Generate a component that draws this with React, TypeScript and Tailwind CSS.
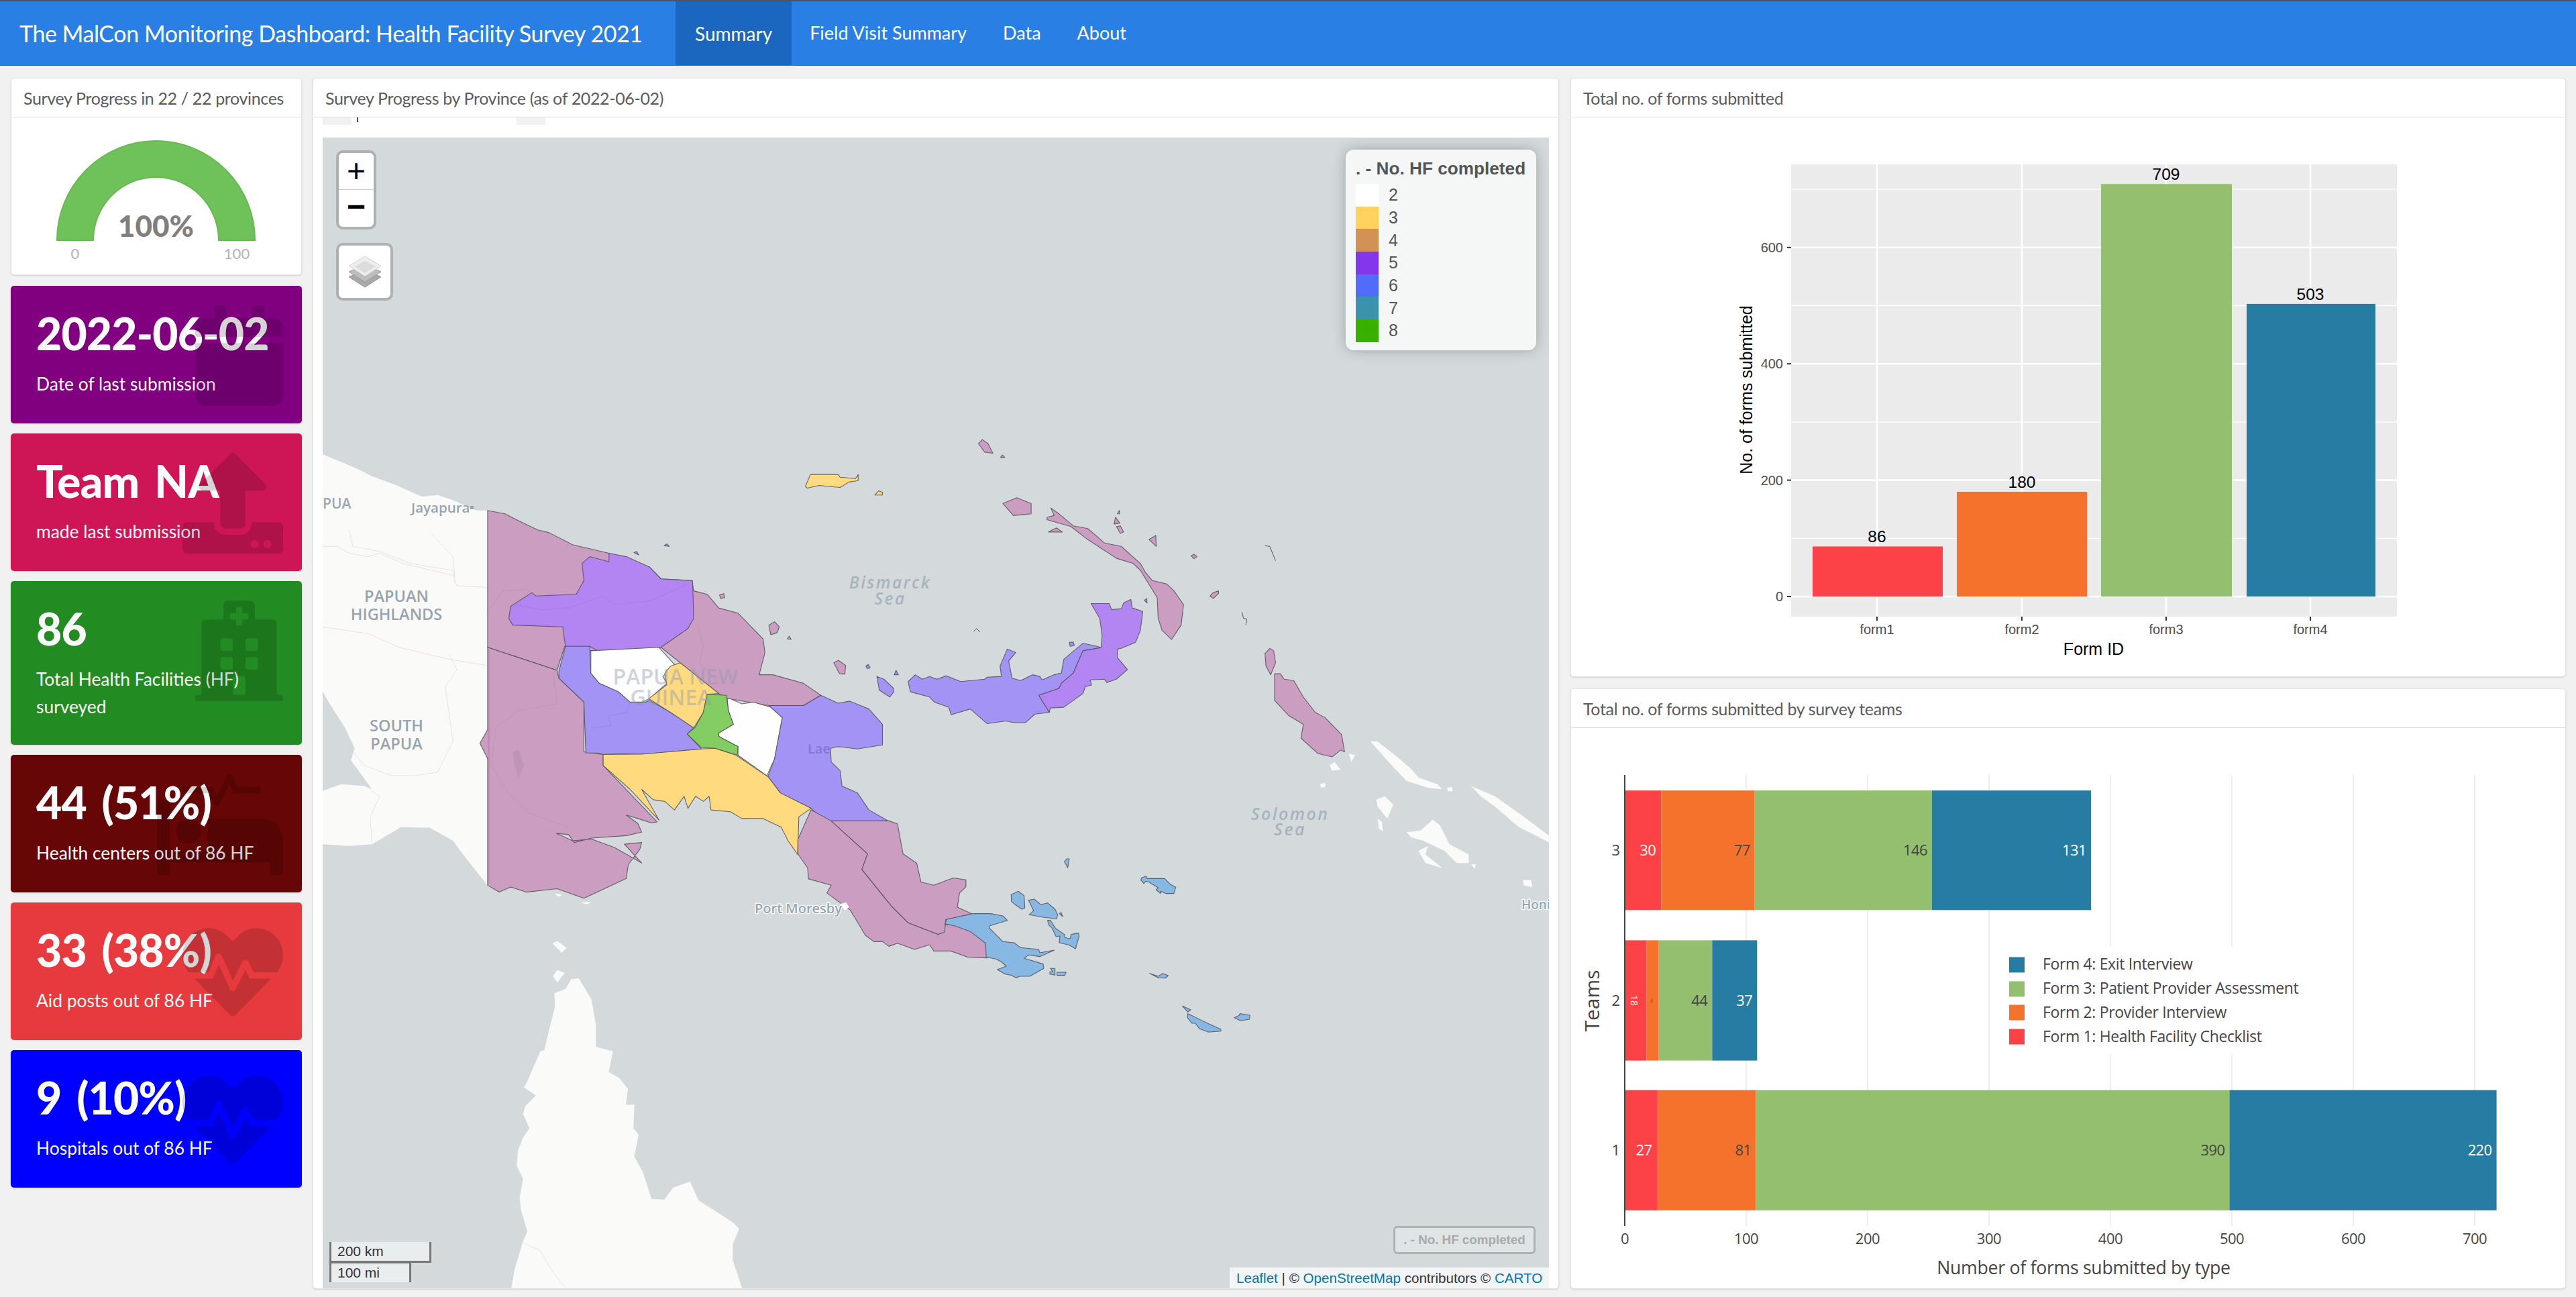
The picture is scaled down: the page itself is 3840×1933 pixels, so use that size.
import React from "react";
import { FaCalendar, FaUpload, FaHospital, FaProcedures, FaHeartbeat } from "react-icons/fa";

const PINK = "#ca9dc1";
const PURPLE = "#b385f2";
const PERI = "#a293f5";
const YEL = "#ffda7e";
const WHITE = "#fefefe";
const GREEN = "#84cd63";
const BLUE = "#86b8e3";
const LAND = "#fafaf8";

const Z4 = "translate(480,600) scale(0.5742,0.5102)";
const Z5 = "translate(1200,600) scale(0.7143,0.5102)";
const Z6 = "translate(480,1200) scale(0.6378,0.4675)";
const Z12 = "translate(1380,1280) scale(0.3333,0.3333)";

function P({ p, f, s = true }: { p: string; f: string; s?: boolean }) {
  return (
    <polygon
      points={p}
      fill={f}
      stroke={s ? "#4f4f55" : "none"}
      strokeOpacity={0.85}
      strokeWidth={1.1}
      strokeLinejoin="round"
      vectorEffect="non-scaling-stroke"
    />
  );
}

function MapDrawing() {
  return (
    <svg viewBox="481 205 1828 1715" className="absolute inset-0 block w-full h-full" preserveAspectRatio="none">
      {/* Base land */}
      <g transform={Z4}>
        <P s={false} f={LAND} p="0,150 95,195 130,215 190,240 260,275 300,270 340,285 400,315 440,315 440,1415 430,1410 380,1340 340,1280 280,1242 205,1240 130,1290 70,1295 0,1290" />
        <P s={false} f="#d4dadc" p="0,840 20,880 60,950 85,1010 75,1045 95,1075 130,1130 110,1120 50,1115 0,1135" />
        <polyline points="0,655 120,675 200,715 330,750 430,768" fill="none" stroke="#efdfe2" strokeWidth={1} vectorEffect="non-scaling-stroke" />
        <polyline points="0,420 40,420 70,440 120,450 150,440 210,470 340,505 350,535 430,540" fill="none" stroke="#efdfe2" strokeWidth={1} vectorEffect="non-scaling-stroke" />
        <polyline points="70,370 80,420 150,435 230,470 340,490 345,530" fill="none" stroke="#e3e7ea" strokeWidth={1} vectorEffect="non-scaling-stroke" />
        <polyline points="330,735 350,780 320,830 340,990 300,1080 240,1090 180,1090 110,1060 80,1020" fill="none" stroke="#e3e7ea" strokeWidth={1} vectorEffect="non-scaling-stroke" />
        <polyline points="285,385 340,450 345,510" fill="none" stroke="#e3e7ea" strokeWidth={1} vectorEffect="non-scaling-stroke" />
        <polyline points="130,1135 150,1150 125,1210 130,1285" fill="none" stroke="#e3e7ea" strokeWidth={1} vectorEffect="non-scaling-stroke" />
      </g>
      <g transform={Z6}>
        <P s={false} f={LAND} p="442,1545 450,1480 470,1390 480,1360 465,1290 462,1250 470,1190 455,1150 458,1100 470,1060 485,1030 470,985 475,960 500,925 472,900 480,880 510,785 520,780 530,720 545,640 543,600 570,585 582,555 600,552 630,620 640,700 640,770 680,785 670,850 695,870 715,905 710,955 730,955 728,1030 740,1050 730,1120 750,1170 770,1255 800,1258 820,1220 860,1200 880,1260 915,1290 960,1330 975,1350 960,1400 960,1450 983,1545" />
        <P s={false} f={LAND} p="538,440 550,433 572,455 560,470" />
        <P s={false} f={LAND} p="540,545 550,525 567,535 550,565" />
        <P s={false} f={LAND} p="605,310 630,308 620,316" />
        <P s={false} f={LAND} p="545,282 562,285 552,292" />
        <polyline points="470,1395 510,1420 540,1490 570,1540" fill="none" stroke="#e3e7ea" strokeWidth={1} vectorEffect="non-scaling-stroke" />
      </g>
      <g transform={Z5}>
        <P s={false} f={LAND} p="1180,990 1195,990 1240,1040 1265,1070 1280,1095 1320,1115 1330,1130 1300,1125 1255,1105 1215,1045" />
        <P s={false} f={LAND} p="1340,1125 1350,1122 1352,1135 1342,1136" />
        <P s={false} f={LAND} p="1390,1120 1440,1150 1500,1210 1553,1265 1553,1285 1490,1240 1440,1180 1410,1150" />
        <P s={false} f={LAND} p="1192,1160 1210,1150 1228,1175 1215,1215 1195,1180" />
        <P s={false} f={LAND} p="1195,1215 1204,1225 1206,1252 1198,1245" />
        <P s={false} f={LAND} p="1255,1255 1285,1250 1310,1218 1325,1235 1345,1290 1385,1320 1385,1345 1360,1345 1335,1310 1290,1280 1265,1270" />
        <P s={false} f={LAND} p="1280,1310 1300,1295 1295,1320 1330,1360 1295,1345" />
        <P s={false} f={LAND} p="1095,1060 1105,1050 1118,1072 1100,1075" />
        <P s={false} f={LAND} p="1075,1115 1085,1110 1086,1122 1077,1125" />
        <P s={false} f={LAND} p="1390,1350 1400,1348 1398,1362" />
        <P s={false} f={LAND} p="1498,1395 1515,1395 1518,1415 1500,1410" />
        <P s={false} f={LAND} p="1135,1025 1148,1030 1140,1050" />
      </g>

      {/* Mainland provinces */}
      <g transform={Z4}>
        <P f={PINK} p="430,315 475,325 510,345 560,372 590,380 650,415 745,440 850,480 880,515 960,520 965,550 1000,560 1030,600 1080,615 1145,690 1150,730 1135,795 1170,795 1250,820 1295,855 1250,885 1160,885 1055,865 1030,850 930,760 880,715 700,725 630,712 610,782 430,715" />
        <P f={PINK} p="430,715 610,782 615,805 680,875 680,1020 730,1028 730,1060 870,1225 855,1228 820,1215 790,1205 820,1230 830,1255 790,1265 700,1272 655,1285 640,1262 608,1258 650,1280 700,1275 760,1300 830,1345 785,1290 830,1285 825,1305 795,1350 790,1390 680,1448 610,1420 530,1430 490,1415 460,1430 430,1410 430,1040 410,995 430,955" />
        <polyline points="433,720 433,1405" fill="none" stroke="#b98cb0" strokeWidth={4} />
        <P f={PURPLE} p="745,440 745,465 695,450 675,470 680,520 660,560 555,565 545,555 490,595 485,630 495,650 625,655 632,712 695,712 720,728 880,715 950,660 965,630 962,520 880,515 850,480 790,450" />
        <P f={PERI} p="632,712 695,712 698,790 720,820 770,845 800,875 840,875 850,870 905,905 965,950 948,968 980,1005 985,1012 830,1027 685,1023 680,875 615,805 615,785" />
        <P f={WHITE} p="698,725 875,715 915,765 885,800 895,820 850,865 830,875 800,875 770,845 720,820 698,790" />
        <P f={YEL} p="930,760 1030,850 1000,852 990,905 965,950 905,905 848,865 895,825 890,790 905,770" />
        <P f={WHITE} p="1052,865 1060,865 1090,880 1120,875 1165,890 1195,920 1180,1010 1175,1040 1155,1090 1080,1030 1080,1005 1030,975 1030,965 1068,940 1055,900" />
        <P f={GREEN} p="1000,852 1050,855 1055,900 1068,940 1030,965 1030,975 1080,1005 1078,1030 1020,1010 985,1008 948,968 968,950 990,905" />
        <P f={YEL} p="730,1028 830,1027 985,1012 1020,1010 1075,1030 1160,1095 1190,1140 1270,1185 1238,1210 1235,1320 1210,1280 1192,1240 1145,1215 1090,1215 1060,1195 1010,1190 1005,1150 990,1165 970,1150 950,1185 940,1150 915,1190 890,1165 860,1160 830,1130 875,1220 800,1130 730,1060" />
        <P f={PERI} p="1160,885 1250,885 1295,855 1340,878 1370,872 1420,895 1455,940 1455,1000 1390,1012 1340,1005 1320,1010 1322,1050 1345,1075 1350,1120 1390,1140 1420,1190 1470,1222 1300,1222 1270,1185 1190,1140 1158,1092 1175,1040 1180,1010 1195,920" />
        <P f={YEL} p="1255,245 1268,210 1340,210 1345,218 1385,222 1392,210 1392,228 1368,232 1345,248 1290,242 1260,250" />
        <P f={YEL} p="1435,270 1445,258 1455,262 1455,270" />
        <P f={PERI} p="888,418 895,413 902,420" />
        <P f={PURPLE} p="810,438 817,435 822,445" />
        <P f={PINK} p="1032,562 1043,558 1045,570 1035,572" />
        <P f={PINK} p="1160,650 1175,640 1187,655 1182,672 1165,678" />
        <P f={PINK} p="1208,690 1213,682 1218,692" />
        {/* rivers over the fills */}
        <polyline points="500,590 570,605 640,600 730,565 760,590 850,580 950,530" fill="none" stroke="#9d70d8" strokeOpacity={0.5} strokeWidth={1} vectorEffect="non-scaling-stroke" />
        <polyline points="430,610 470,550 530,545 560,570" fill="none" stroke="#b488ab" strokeOpacity={0.5} strokeWidth={1} vectorEffect="non-scaling-stroke" />
        <polyline points="700,950 750,945 745,915 790,905 800,880" fill="none" stroke="#8a7ad8" strokeOpacity={0.5} strokeWidth={1} vectorEffect="non-scaling-stroke" />
        <polyline points="600,790 610,880 510,900 450,950 440,1060 490,1150 540,1200 640,1240" fill="none" stroke="#b488ab" strokeOpacity={0.45} strokeWidth={1} vectorEffect="non-scaling-stroke" />
        <polygon points="495,1020 510,1015 525,1060 510,1095 500,1060" fill="#bd95b7" />
        <polyline points="975,650 990,710 980,760 1030,820" fill="none" stroke="#b488ab" strokeOpacity={0.5} strokeWidth={1} vectorEffect="non-scaling-stroke" />
      </g>
      <g transform={Z6}>
        <P f={PINK} p="1143,15 1190,50 1275,155 1262,205 1330,320 1370,375 1440,412 1458,380 1520,380 1555,440 1555,487 1510,485 1470,465 1430,465 1420,445 1385,460 1345,440 1325,450 1310,435 1290,435 1270,415 1235,335 1210,310 1180,280 1190,255 1137,235 1135,200 1112,155 1112,110" />
        <P f={PINK} p="1190,50 1325,50 1345,60 1358,155 1390,185 1400,245 1430,255 1475,232 1505,238 1505,260 1490,280 1485,325 1520,347 1458,365 1455,405 1440,412 1370,375 1330,320 1262,205 1275,155" />
        <P s={false} f={WHITE} p="1210,315 1225,310 1232,325 1222,335" />
      </g>
      <g transform={Z12}>
        <P f={BLUE} p="85,290 95,270 210,245 290,245 345,255 365,275 285,300 285,310 345,370 395,375 425,397 505,405 510,420 575,408 510,437 460,430 440,445 525,470 528,490 465,525 420,525 405,532 380,520 355,515 320,495 360,480 340,462 320,450 270,438 268,378 200,325 130,300" />
        <P f={BLUE} p="382,160 415,145 440,165 443,220 430,225 400,205 383,190" />
        <P f={BLUE} p="460,185 485,180 515,205 545,197 578,225 590,250 585,268 530,262 462,250 482,232" />
        <P f={BLUE} p="597,245 605,240 613,258" />
        <P f={BLUE} p="545,275 557,275 580,310 622,340 622,352 645,358 650,338 683,332 686,345 670,402 640,385 597,375 600,345 583,348 565,310 550,295" />
        <P f={BLUE} p="555,505 568,505 558,490 578,490 578,520 555,515" />
        <P f={BLUE} p="587,507 628,507 622,521 587,521" />
        <P f={BLUE} p="965,85 985,78 990,88 1068,88 1095,115 1118,127 1110,155 1075,155 1050,145 1050,155 1030,138 1040,130 1000,105 985,100 975,110 962,95" />
        <P f={BLUE} p="620,12 630,0 642,0 635,40" />
        <P f={BLUE} p="1002,512 1040,525 1060,512 1085,522 1072,533 1040,532" />
        <P f={BLUE} p="1148,658 1185,675 1172,685" />
        <P f={BLUE} p="1172,692 1260,735 1320,762 1320,770 1265,775 1225,760 1205,735 1190,735 1170,710" />
        <P f={BLUE} p="1380,710 1402,700 1405,692 1450,700 1448,717 1408,724" />
      </g>

      {/* Island provinces */}
      <g transform={Z5}>
        <P f={PINK} p="362,120 370,108 382,120 392,148 375,145" />
        <P f={PINK} p="408,160 412,153 417,160" />
        <P f={PINK} p="413,295 442,278 472,295 472,325 435,330" />
        <P f={PINK} p="513,308 530,325 560,360 590,368 625,410 660,420 700,470 710,495 725,520 755,530 770,550 790,590 785,650 765,692 745,665 737,630 735,570 700,490 685,470 650,455 590,400 555,362 505,342 505,335 520,330" />
        <P f={PINK} p="508,378 525,366 537,378" />
        <P f={PINK} p="645,355 648,335 657,352" />
        <P f={PINK} p="650,362 658,360 665,378 658,382" />
        <P f={PINK} p="652,325 656,315 657,325" />
        <P f={PINK} p="718,400 732,388 733,420" />
        <P f={PINK} p="806,448 812,443 818,450 812,456" />
        <P f={PINK} p="845,565 852,555 863,550 863,558 852,572" />
        <P f={PINK} p="960,733 970,718 978,725 982,760 972,795 962,770" />
        <P f={PINK} p="980,792 992,792 1000,808 1020,812 1040,860 1065,905 1085,920 1120,970 1126,1020 1118,1015 1100,1035 1070,1025 1035,980 1040,940 1010,915 980,870" />
        <P f={PINK} p="60,760 70,753 85,768 83,793 72,792" />
        <P f={PERI} p="215,815 230,795 245,808 260,800 275,808 295,798 325,815 375,808 380,802 410,800 407,770 422,720 440,730 425,755 432,805 450,812 475,795 490,800 495,810 520,795 535,790 540,750 580,703 610,712 618,716 580,725 560,790 535,820 530,835 488,855 510,905 480,910 460,935 435,935 420,930 380,938 345,895 305,912 300,890 270,875 260,860 220,845" />
        <P f={PURPLE} p="597,587 635,587 640,605 660,602 665,585 680,575 683,600 705,610 700,665 690,700 660,718 652,720 652,745 673,780 650,808 630,818 625,808 595,810 598,825 585,830 580,850 540,890 512,892 510,905 488,855 530,835 535,820 560,790 580,725 618,716 620,680 615,630" />
        <P f={PERI} p="150,800 165,808 185,835 185,845 177,860 155,840" />
        <P f={PERI} p="552,700 560,700 562,710 553,712" />
        <P f={PERI} p="708,578 713,572 714,585" />
        <P f={PERI} p="127,770 132,765 136,775 130,777" />
        <P f={PERI} p="186,795 190,782 195,795" />
        <polyline points="960,418 970,420 982,462" fill="none" stroke="#555" strokeWidth={1} vectorEffect="non-scaling-stroke" />
        <polyline points="912,612 915,630 922,632 920,650" fill="none" stroke="#555" strokeWidth={1} vectorEffect="non-scaling-stroke" />
        <polyline points="352,668 358,660 365,670" fill="none" stroke="#555" strokeWidth={1} vectorEffect="non-scaling-stroke" />
      </g>

      {/* Place labels */}
      <g className="font-['Open_Sans',sans-serif]" textAnchor="middle">
        <text x="481" y="758" fontSize="21" fontWeight="600" fill="#9ba8b4" textAnchor="start">PUA</text>
        <text x="613" y="764" fontSize="20.5" fontWeight="600" fill="#97a4b0" textAnchor="start">Jayapura</text>
        <rect x="701" y="754" width="5" height="5" fill="#97a4b0" />
        <text x="591" y="897" fontSize="23.5" fontWeight="600" fill="#97a4b0">PAPUAN</text>
        <text x="591" y="924" fontSize="23.5" fontWeight="600" fill="#97a4b0">HIGHLANDS</text>
        <text x="591" y="1090" fontSize="23.5" fontWeight="600" fill="#97a4b0">SOUTH</text>
        <text x="591" y="1117" fontSize="23.5" fontWeight="600" fill="#97a4b0">PAPUA</text>
        <text x="1327" y="877" fontSize="24.5" fontWeight="600" fontStyle="italic" fill="#a8b4bd" letterSpacing="2.4">Bismarck</text>
        <text x="1327" y="901" fontSize="24.5" fontWeight="600" fontStyle="italic" fill="#a8b4bd" letterSpacing="2.4">Sea</text>
        <text x="1923" y="1222" fontSize="25" fontWeight="600" fontStyle="italic" fill="#a8b4bd" letterSpacing="2.4">Solomon</text>
        <text x="1923" y="1245" fontSize="25" fontWeight="600" fontStyle="italic" fill="#a8b4bd" letterSpacing="2.4">Sea</text>
        <text x="1007" y="1020" fontSize="32" fontWeight="600" fill="#8f9bb0" fillOpacity={0.45}>PAPUA NEW</text>
        <text x="1000" y="1051" fontSize="32" fontWeight="600" fill="#8f9bb0" fillOpacity={0.45}>GUINEA</text>
        <text x="1204" y="1123" fontSize="20" fontWeight="600" fill="#7f79d8" textAnchor="start">Lae</text>
        <text x="1125" y="1361" fontSize="20" fontWeight="600" fill="#97a4b0" stroke="#ffffff" strokeWidth={2.5} paintOrder="stroke" textAnchor="start">Port Moresby</text>
        <text x="2268" y="1355" fontSize="19" fontWeight="600" fill="#97a4b0" stroke="#ffffff" strokeWidth={2.5} paintOrder="stroke" textAnchor="start">Honi</text>
      </g>
    </svg>
  );
}

function LayersIcon() {
  return (
    <svg viewBox="0 0 52 50" className="block w-[52px] h-[48px]">
      <polygon points="26,22 51,33 26,49 1,33" fill="#a9a9a9" stroke="#8e8e8e" strokeWidth={1} />
      <polygon points="26,14 51,25 26,41 1,25" fill="#bdbdbd" stroke="#979797" strokeWidth={1} />
      <polygon points="26,1 51,16 26,32 1,16" fill="#eeeeee" stroke="#cfcfcf" strokeWidth={1} />
      <polygon points="26,8 42,17 26,27 10,17" fill="#dcdcdc" />
    </svg>
  );
}

function MapPanel() {
  return (
    <div className="w-[1858px] h-[1805px] bg-white border border-[#e3e3e3] rounded-[5px] flex flex-col shadow-sm">
      <PanelHeader title="Survey Progress by Province (as of 2022-06-02)" />
      <div className="h-[30px] pl-[14px] flex items-start">
        <div className="w-[43px] h-[11px] bg-[#f1f1f1]" />
        <div className="ml-[8px] w-[2px] h-[7px] bg-[#45505c]" />
        <div className="ml-[236px] w-[43px] h-[11px] bg-[#f1f1f1]" />
      </div>
      <div className="ml-[14px] w-[1828px] h-[1715px] relative overflow-hidden bg-[#d4dadc]">
        <MapDrawing />
        <div className="absolute left-[20px] top-[19px] w-[60px] h-[118px] rounded-[10px] border-[4px] border-[#aeb1b3] bg-white flex flex-col overflow-hidden font-['Liberation_Sans',sans-serif] text-black">
          <div className="h-[55px] flex items-center justify-center border-b border-[#cccccc] text-[48px] leading-none">+</div>
          <div className="flex-1 flex items-center justify-center text-[48px] leading-none font-bold pb-[6px]">−</div>
        </div>
        <div className="absolute left-[20px] top-[157px] w-[85px] h-[86px] rounded-[10px] border-[4px] border-[#aeb1b3] bg-white flex items-center justify-center">
          <LayersIcon />
        </div>
        <div className="absolute right-[19px] top-[18px] w-[284px] h-[299px] rounded-[12px] bg-[#f5f7f7] shadow-[0_0_20px_rgba(0,0,0,0.25)] pl-[15px] pt-[6px] font-['Liberation_Sans',sans-serif] text-[#555555]">
          <div className="h-[45px] text-[26.2px] leading-[45px] font-bold whitespace-nowrap">. - No. HF completed</div>
          <div className="flex flex-col">
            {[
              ["2", "bg-[#ffffff]"],
              ["3", "bg-[#ffd25d]"],
              ["4", "bg-[#d39156]"],
              ["5", "bg-[#8337eb]"],
              ["6", "bg-[#526cfa]"],
              ["7", "bg-[#3a93ad]"],
              ["8", "bg-[#38b000]"],
            ].map(([n, c]) => (
              <div key={n} className="h-[33.7px] flex items-center">
                <div className={"w-[34px] h-full " + c} />
                <span className="ml-[15px] text-[25px] leading-none">{n}</span>
              </div>
            ))}
          </div>
        </div>
        <div className="absolute right-[20px] bottom-[51px] w-[212px] h-[42px] rounded-[6px] border-[3px] border-[#aeb2b3] bg-[#dfe4e5] flex items-center justify-center font-['Liberation_Sans',sans-serif] font-bold text-[18.8px] text-[#a7abac] whitespace-nowrap">
          . - No. HF completed
        </div>
        <div className="absolute left-[10px] bottom-[9px] flex flex-col items-start font-['Liberation_Sans',sans-serif] text-[21px] text-[#333333]">
          <div className="w-[152px] h-[31px] border-[3px] border-t-0 border-[#777777] bg-white/50 leading-[28px] pl-[9px]">200 km</div>
          <div className="w-[122px] h-[31px] -mt-[2px] border-[3px] border-b-0 border-[#777777] bg-white/50 leading-[28px] pl-[9px]">100 mi</div>
        </div>
        <div className="absolute right-0 bottom-0 w-[476px] h-[31px] bg-[#f2f4f6] pl-[10px] font-['Liberation_Sans',sans-serif] text-[20.6px] leading-[31px] text-[#333333] whitespace-nowrap">
          <span className="text-[#0078a8]">Leaflet</span> | © <span className="text-[#0078a8]">OpenStreetMap</span> contributors © <span className="text-[#0078a8]">CARTO</span>
        </div>
      </div>
    </div>
  );
}

function PanelHeader({ title }: { title: string }) {
  return (
    <div className="h-[58px] shrink-0 border-b border-[#dddddd] pl-[18px] pt-[2px] flex items-center text-[25px] text-[#5c5c5c] whitespace-nowrap tracking-[-0.35px]">
      {title}
    </div>
  );
}

function Gauge() {
  const cx = 232.5;
  const cy = 358;
  return (
    <svg viewBox="17 175 432 234" className="block w-full flex-1 min-h-0" preserveAspectRatio="none">
      <path
        d={`M ${cx - 147.5} ${cy} A 147.5 148 0 0 1 ${cx + 147.5} ${cy} L ${cx + 93.5} ${cy} A 93.5 94 0 0 0 ${cx - 93.5} ${cy} Z`}
        fill="#6fc259"
        stroke="#68b94f"
        strokeWidth={2}
      />
      <text x={cx} y="353" textAnchor="middle" fontSize="44" fontWeight="900" fill="#7f7f7f" className="font-['Lato',sans-serif]">100%</text>
      <text x="112" y="386" textAnchor="middle" fontSize="22" fill="#b3b3b3" className="font-['Lato',sans-serif]">0</text>
      <text x="353" y="386" textAnchor="middle" fontSize="22" fill="#b3b3b3" className="font-['Lato',sans-serif]">100</text>
    </svg>
  );
}

type BoxProps = {
  value: string;
  label: string;
  bg: string;
  h: string;
  icon: React.ReactNode;
};

function ValueBox({ value, label, bg, h, icon }: BoxProps) {
  return (
    <div className={"relative overflow-hidden rounded-[5px] pl-[38px] pt-[26px] text-[#fbfbfb] shadow-sm " + bg + " " + h}>
      <div className="text-[66px] leading-[90px] font-black whitespace-nowrap tracking-[-0.9px] [word-spacing:8px]">{value}</div>
      <div className="text-[26.4px] leading-[41px] pr-[30px] mt-[10px]">{label}</div>
      <div className="absolute right-[28px] top-[29px] text-black/15">{icon}</div>
    </div>
  );
}

function LeftColumn() {
  return (
    <div className="w-[434px] shrink-0 flex flex-col">
      <div className="h-[294px] bg-white border border-[#e3e3e3] rounded-[5px] flex flex-col shadow-sm">
        <PanelHeader title="Survey Progress in 22 / 22 provinces" />
        <Gauge />
      </div>
      <div className="mt-[16px] flex flex-col gap-[15px]">
        <ValueBox value="2022-06-02" label="Date of last submission" bg="bg-[#800080]" h="h-[205px]" icon={<FaCalendar className="w-[131px] h-[150px]" />} />
        <ValueBox value="Team NA" label="made last submission" bg="bg-[#ce1556]" h="h-[205px]" icon={<FaUpload className="w-[150px] h-[150px]" />} />
        <ValueBox value="86" label="Total Health Facilities (HF) surveyed" bg="bg-[#228b22]" h="h-[244px]" icon={<FaHospital className="w-[131px] h-[150px]" />} />
        <ValueBox value="44 (51%)" label="Health centers out of 86 HF" bg="bg-[#660606]" h="h-[205px]" icon={<FaProcedures className="w-[188px] h-[150px]" />} />
        <ValueBox value="33 (38%)" label="Aid posts out of 86 HF" bg="bg-[#e63a3e]" h="h-[205px]" icon={<FaHeartbeat className="w-[150px] h-[150px]" />} />
        <ValueBox value="9 (10%)" label="Hospitals out of 86 HF" bg="bg-[#0000ff]" h="h-[205px]" icon={<FaHeartbeat className="w-[150px] h-[150px]" />} />
      </div>
    </div>
  );
}

const FORM_COLORS = ["#fc4246", "#f4722c", "#93bf6e", "#277ca3"];

function TotalsChart() {
  const y = (v: number) => 889 - v * 0.867;
  const bars = [
    { n: "form1", v: 86, x: 2702, w: 194, cx: 2798 },
    { n: "form2", v: 180, x: 2917, w: 194, cx: 3014 },
    { n: "form3", v: 709, x: 3132, w: 195, cx: 3229 },
    { n: "form4", v: 503, x: 3349, w: 192, cx: 3444 },
  ];
  return (
    <svg viewBox="2342 175 1482 833" className="block w-full flex-1 min-h-0 font-['Liberation_Sans',sans-serif]" preserveAspectRatio="none">
      <rect x="2670" y="245" width="903" height="674" fill="#ebebeb" />
      {[100, 300, 500, 700].map((v) => (
        <line key={v} x1="2670" x2="3573" y1={y(v)} y2={y(v)} stroke="#ffffff" strokeWidth={1.3} />
      ))}
      {[0, 200, 400, 600].map((v) => (
        <line key={v} x1="2670" x2="3573" y1={y(v)} y2={y(v)} stroke="#ffffff" strokeWidth={2.6} />
      ))}
      {bars.map((b) => (
        <line key={b.n} x1={b.cx} x2={b.cx} y1="245" y2="919" stroke="#ffffff" strokeWidth={2.6} />
      ))}
      {bars.map((b, i) => (
        <rect key={b.n} x={b.x} y={y(b.v)} width={b.w} height={b.v * 0.867} fill={FORM_COLORS[i]} />
      ))}
      {bars.map((b) => (
        <text key={b.n} x={b.cx} y={y(b.v) - 6} textAnchor="middle" fontSize="24.5" fill="#000000">{b.v}</text>
      ))}
      {[0, 200, 400, 600].map((v) => (
        <g key={v}>
          <line x1="2664" x2="2670" y1={y(v)} y2={y(v)} stroke="#333333" strokeWidth={2} />
          <text x="2658" y={y(v) + 7} textAnchor="end" fontSize="20" fill="#4d4d4d">{v}</text>
        </g>
      ))}
      {bars.map((b) => (
        <g key={b.n}>
          <line x1={b.cx} x2={b.cx} y1="919" y2="925" stroke="#333333" strokeWidth={2} />
          <text x={b.cx} y="945" textAnchor="middle" fontSize="20" fill="#4d4d4d">{b.n}</text>
        </g>
      ))}
      <text x="3121" y="976" textAnchor="middle" fontSize="25" fill="#000000">Form ID</text>
      <text transform="rotate(-90 2612 581)" x="2612" y="581" textAnchor="middle" fontSize="25" fill="#000000">No. of forms submitted</text>
    </svg>
  );
}

function TeamsChart() {
  const x = (v: number) => 2422 + v * 1.81;
  const rows = [
    { t: "3", y: 1179, h: 178, vals: [30, 77, 146, 131] },
    { t: "2", y: 1402, h: 179, vals: [18, 10, 44, 37] },
    { t: "1", y: 1625, h: 179, vals: [27, 81, 390, 220] },
  ];
  const legend = [
    { c: FORM_COLORS[3], y: 1427, t: "Form 4: Exit Interview" },
    { c: FORM_COLORS[2], y: 1463, t: "Form 3: Patient Provider Assessment" },
    { c: FORM_COLORS[1], y: 1498, t: "Form 2: Provider Interview" },
    { c: FORM_COLORS[0], y: 1534, t: "Form 1: Health Facility Checklist" },
  ];
  return (
    <svg viewBox="2342 1086 1482 834" className="block w-full flex-1 min-h-0 font-['Open_Sans',sans-serif]" preserveAspectRatio="none">
      {[1, 2, 3, 4, 5, 6, 7].map((v) => (
        <line key={v} x1={x(v * 100)} x2={x(v * 100)} y1="1156" y2="1827" stroke="#eeeeee" strokeWidth={2} />
      ))}
      {rows.map((r) => {
        let acc = 0;
        const mid = r.y + r.h / 2;
        return (
          <g key={r.t}>
            {r.vals.map((v, i) => {
              const start = acc;
              acc += v;
              const end = acc;
              const light = i === 0 || i === 3;
              const color = light ? "#ffffff" : "#444444";
              let label: React.ReactNode;
              if (v === 18) {
                label = (
                  <text transform={`rotate(90 2436 ${mid})`} x="2436" y={mid + 5} textAnchor="middle" fontSize="14" fill="#ffffff">{v}</text>
                );
              } else if (v === 10) {
                label = (
                  <text transform={`rotate(90 2462 ${mid})`} x="2462" y={mid + 2} textAnchor="middle" fontSize="6" fill="#444444">{v}</text>
                );
              } else if (i === 0) {
                label = (
                  <text x={(x(start) + x(end)) / 2 + (v === 30 ? 7 : 4)} y={mid + 8} textAnchor="middle" fontSize="22" fill={color} letterSpacing="-0.6">{v}</text>
                );
              } else {
                label = (
                  <text x={x(end) - 7} y={mid + 8} textAnchor="end" fontSize="22" fill={color} letterSpacing="-0.6">{v}</text>
                );
              }
              return (
                <g key={i}>
                  <rect x={x(start)} y={r.y} width={x(end) - x(start)} height={r.h} fill={FORM_COLORS[i]} />
                  {label}
                </g>
              );
            })}
            <text x="2415" y={mid + 8} textAnchor="end" fontSize="22" fill="#444444">{r.t}</text>
          </g>
        );
      })}
      <line x1="2422" x2="2422" y1="1156" y2="1827" stroke="#444444" strokeWidth={2} />
      <rect x="2985" y="1411" width="415" height="161" fill="#ffffff" />
      {legend.map((l) => (
        <g key={l.t}>
          <rect x="2995" y={l.y} width="23" height="23" fill={l.c} />
          <text x="3045" y={l.y + 19} fontSize="23" fill="#444444" letterSpacing="-0.35">{l.t}</text>
        </g>
      ))}
      {[0, 1, 2, 3, 4, 5, 6, 7].map((v) => (
        <text key={v} x={x(v * 100)} y="1854" textAnchor="middle" fontSize="22" fill="#444444" letterSpacing="-0.5">{v * 100}</text>
      ))}
      <text x="3106" y="1899" textAnchor="middle" fontSize="26.7" fill="#444444" letterSpacing="-0.3">Number of forms submitted by type</text>
      <text transform="rotate(-90 2384 1492)" x="2384" y="1492" textAnchor="middle" fontSize="30" fill="#444444">Teams</text>
    </svg>
  );
}

export default function App() {
  return (
    <div className="w-[3840px] h-[1933px] overflow-hidden bg-[#f1f1f1] font-['Lato',sans-serif]">
      <nav className="h-[98px] border-t-2 border-t-[#4a5560] border-b border-b-[#1f6fd0] bg-[#2a7fe4] flex text-white">
        <div className="w-[1007px] pl-[29px] flex items-center text-[34px] whitespace-nowrap tracking-[-0.4px]">
          The MalCon Monitoring Dashboard: Health Facility Survey 2021
        </div>
        <div className="flex text-[27px]">
          <a className="flex items-center px-[29px] bg-[#1b67bf] text-[28px]">Summary</a>
          <a className="flex items-center px-[27px]">Field Visit Summary</a>
          <a className="flex items-center px-[27px]">Data</a>
          <a className="flex items-center px-[27px]">About</a>
        </div>
      </nav>
      <main className="pl-[16px] pt-[18px] flex gap-[16px]">
        <LeftColumn />
        <MapPanel />
        <div className="w-[1484px] ml-px flex flex-col gap-[17px]">
          <div className="h-[893px] bg-white border border-[#e3e3e3] rounded-[5px] flex flex-col shadow-sm">
            <PanelHeader title="Total no. of forms submitted" />
            <TotalsChart />
          </div>
          <div className="h-[895px] bg-white border border-[#e3e3e3] rounded-[5px] flex flex-col shadow-sm">
            <PanelHeader title="Total no. of forms submitted by survey teams" />
            <TeamsChart />
          </div>
        </div>
      </main>
    </div>
  );
}
